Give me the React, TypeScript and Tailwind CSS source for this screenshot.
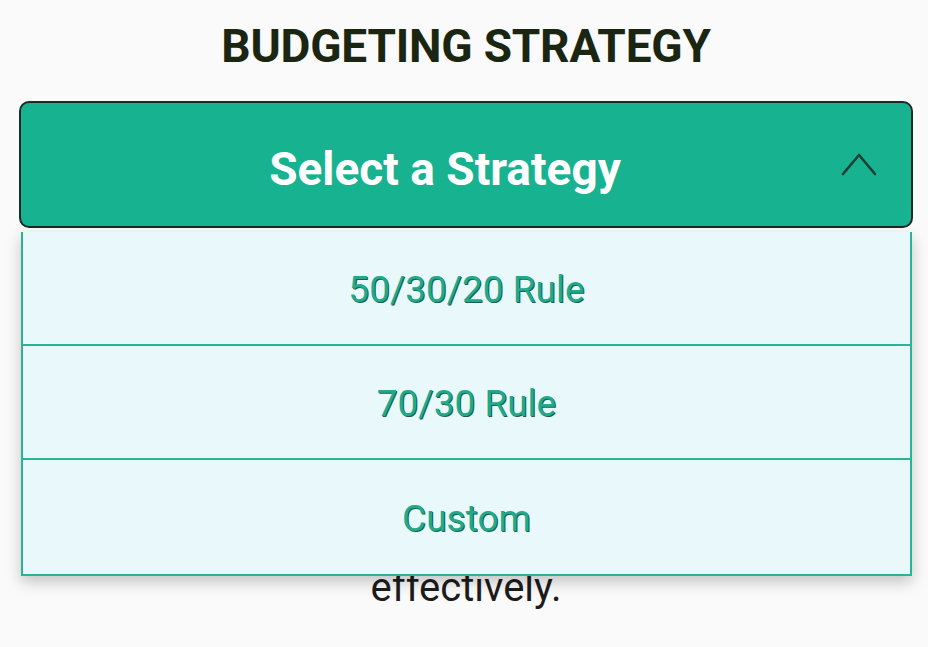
const strategies = ["50/30/20 Rule", "70/30 Rule", "Custom"];

export default function App() {
  return (
    <div className="min-h-[647px] bg-[#fafafa] font-['Roboto',sans-serif] pl-[19px] pr-[15px]">
      <h1 className="h-[93px] flex items-center justify-center text-[46px] font-bold text-[#1b2612] tracking-[-0.2px]">
        BUDGETING STRATEGY
      </h1>

      <div className="relative mt-[8px]">
        <button className="w-full h-[127px] rounded-[10px] border-2 border-[#1c2a24] bg-[#17b290] flex items-center justify-center pr-[42px] pt-[10px] relative">
          <span className="text-[46px] font-bold text-white">Select a Strategy</span>
          <svg
            width="36"
            height="26"
            viewBox="0 0 36 26"
            className="absolute right-[34px] top-[49px]"
            fill="none"
            stroke="#1e3d34"
            strokeWidth="2.6"
            strokeLinecap="round"
            strokeLinejoin="round"
          >
            <polyline points="2,22 18,3 34,22" />
          </svg>
        </button>

        <p className="mt-[240px] text-center text-[40px] leading-[48px] text-[#1c1c1c]">
          Choose the strategy that best fits
          <br />
          your goals to manage your money
          <br />
          effectively.
        </p>

        {/* Dropdown menu */}
        <ul className="absolute left-[2px] right-[1px] top-[131px] bg-[#e9f8fb] border-x-2 border-b-2 border-[#2ab394] shadow-[0_6px_14px_rgba(0,0,0,0.22)]">
          {strategies.map((s, i) => (
            <li
              key={s}
              className={`h-[114px] flex items-center justify-center pt-[4px] text-[37px] font-normal text-[#22a98a] [text-shadow:1px_1px_0_#1a5f4e] ${
                i < strategies.length - 1 ? "border-b-2 border-[#2ab394]" : ""
              }`}
            >
              {s}
            </li>
          ))}
        </ul>
      </div>
    </div>
  );
}
